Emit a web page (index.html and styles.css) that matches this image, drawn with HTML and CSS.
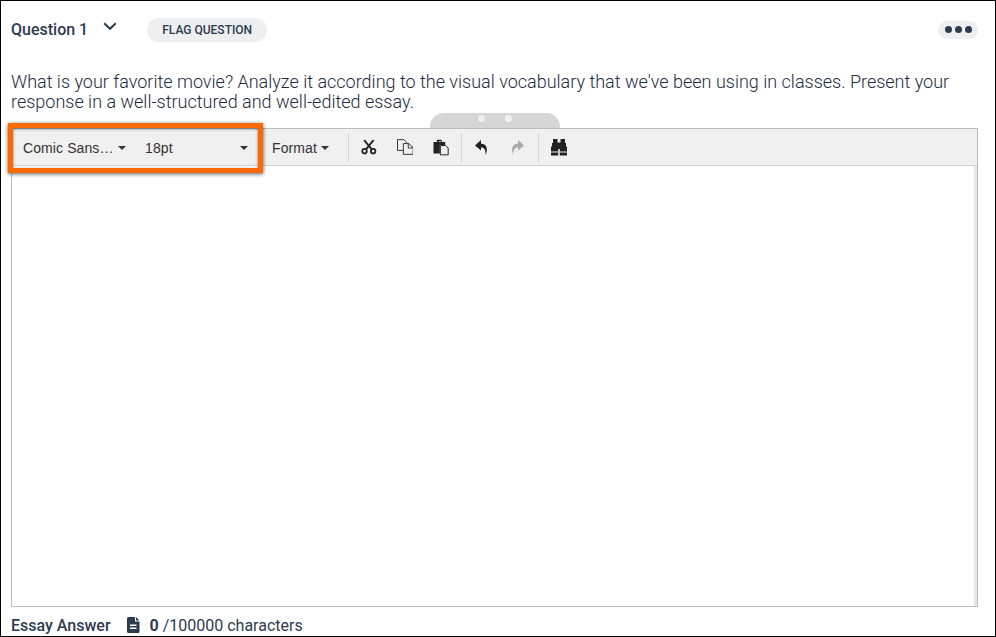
FILE: index.html
```html
<!DOCTYPE html>
<html lang="en">
<head>
<meta charset="utf-8">
<title>Question 1</title>
<link rel="stylesheet" href="styles.css">
</head>
<body>
<main class="frame">
  <header class="qhead">
    <span class="qtitle">Question 1</span>
    <svg class="chev" width="14" height="9" viewBox="0 0 14 9"><path d="M1.2 1.2 7 6.800l5.800-5.600" fill="none" stroke="#2d3b4e" stroke-width="2"/></svg>
    <button class="flag">FLAG QUESTION</button>
    <span class="more"><i></i><i></i><i></i></span>
  </header>
  <p class="prompt">What is your favorite movie? Analyze it according to the visual vocabulary that we've been using in classes. Present your response in a well-structured and well-edited essay.</p>
  <div class="handle"><i></i><i></i></div>
  <section class="editor">
    <div class="highlight"></div>
    <div class="toolbar">
      <div class="tgroup fonts">
        <span class="sel sel-font">Comic Sans…<b class="caret"></b></span>
        <span class="sel sel-size">18pt<b class="caret"></b></span>
      </div>
      <div class="tgroup fmt">
        <span class="sel">Format<b class="caret"></b></span>
      </div>
      <div class="tgroup icons">
        <svg width="16" height="16" viewBox="0 0 16 16"><g fill="none" stroke="#222" stroke-width="1.800"><circle cx="3.600" cy="12.300" r="2.300"/><circle cx="12.400" cy="12.300" r="2.300"/><path d="M5 10.500 12.800 1M11 10.500 3.200 1" stroke-width="1.900"/></g></svg>
        <svg width="17" height="16" viewBox="0 0 17 16"><g stroke="#333" stroke-width="1" fill="#f0f0f0"><path d="M.5.500h6.500l3 3v8H.5z"/><path d="M6.500 4.500h5.500l4.500 4v7h-10z"/><path d="M11.500 4.500v4.500h5" fill="none"/></g></svg>
        <svg width="16" height="17" viewBox="0 0 16 17"><path d="M.5 3h3.500V1.500C4 .8 4.500.5 5 .5h3c.6 0 1 .4 1 1V3h3.500v3H7v8.500H.5z" fill="#222"/><path d="M6 2.500h2" stroke="#f0f0f0"/><path d="M7.500 6.500h5.500l2.500 2.500v7h-8z" fill="#f0f0f0" stroke="#222"/></svg>
      </div>
      <div class="tgroup icons">
        <svg width="15" height="17" viewBox="0 0 15 17"><path d="M7 1 1 6.500 7 11.500V8.500c3 0 4.500 1.800 4.800 7.500C13.800 10.500 13.500 5 7 4.800z" fill="#222"/></svg>
        <svg width="15" height="17" viewBox="0 0 15 17"><path d="M8 1l6 5.500L8 11.500V8.500c-3 0-4.500 1.800-4.800 7.500C1.200 10.500 1.500 5 8 4.800z" fill="#aaa"/></svg>
      </div>
      <div class="tgroup icons last">
        <svg width="18" height="17" viewBox="0 0 18 17"><path d="M3 0h4.500v3.500h3V0H15v4h1v3l1 1v8.500h-7.200V10H8.200v6.500H1V8l1-1V4h1z" fill="#222"/><path d="M1 13h7.200M9.800 13H17" stroke="#f0f0f0" stroke-width="1"/></svg>
      </div>
    </div>
    <div class="body"></div>
  </section>
  <footer class="foot">
    <span class="flabel">Essay Answer</span>
    <svg class="doc" width="13" height="16" viewBox="0 0 13 16"><path fill-rule="evenodd" d="M1.500 0H8v4.500h4.500v10a1.500 1.500 0 0 1-1.500 1.500H1.500A1.500 1.500 0 0 1 0 14.500v-13A1.500 1.500 0 0 1 1.500 0zM3 7.500V9h6.500V7.500zM3 10.500V12h6.500v-1.500zM9 0l3.500 3.500H9z" fill="#2d3b4e"/></svg>
    <span class="count"><strong>0</strong> /100000 characters</span>
  </footer>
</main>
</body>
</html>
```
FILE: styles.css
```css
* { box-sizing: border-box; }
html, body { margin: 0; padding: 0; background: #fff; }
.frame {
  position: relative;
  width: 996px;
  height: 637px;
  border: 1px solid #000;
  padding: 0 17px 0 10px;
  font-family: Roboto, sans-serif;
  color: #2d3b4e;
  overflow: hidden;
}
.qhead { display: flex; align-items: center; height: 58px; padding-bottom: 1px; }
.qtitle { font-size: 16px; font-weight: 500; }
.chev { margin: -6px 0 0 15px; }
.flag {
  margin-left: 30px;
  width: 120px;
  height: 24px;
  border: 0;
  border-radius: 12px;
  background: #eeeff1;
  color: #2d3b4e;
  font: 500 12px Roboto, sans-serif;
  padding: 0;
}
.more {
  margin-left: auto;
  width: 40px;
  height: 18px;
  border-radius: 9px;
  background: #eeeff1;
  display: flex;
  align-items: center;
  justify-content: center;
  gap: 3px;
}
.more i { width: 7px; height: 7px; border-radius: 50%; background: #2d3b4e; }
.prompt { margin: 13px -10px 0 0; font-size: 18px; font-weight: 300; line-height: 20px; color: #1d2c40; }
.handle {
  width: 130px;
  height: 15px;
  margin: 1px 0 0 419px;
  background: #d6d6d6;
  border-radius: 14px 14px 0 0;
  display: flex;
  justify-content: center;
  align-items: center;
  gap: 20px;
  padding: 0 0 4px;
}
.handle i { width: 7px; height: 7px; border-radius: 50%; background: #f0f0f0; }
.editor {
  position: relative;
  height: 479px;
  border: 1px solid #bdbdbd;
  display: flex;
  flex-direction: column;
}
.highlight {
  position: absolute;
  left: -4px;
  top: -6px;
  width: 255px;
  height: 50px;
  border: 5px solid #f96a04;
  box-shadow: 0 1px 4px rgba(0, 0, 0, .65), inset 0 1px 3px rgba(0, 0, 0, .5);
  z-index: 2;
}
.toolbar {
  height: 37px;
  background: #f0f0f0;
  border-bottom: 1px solid #cfcfcf;
  display: flex;
  align-items: center;
  font-family: "Liberation Sans", sans-serif;
  font-size: 14px;
  letter-spacing: .1px;
  color: #333;
  flex: none;
}
.tgroup { display: flex; align-items: center; height: 29px; }
.tgroup + .tgroup { border-left: 1px solid #d6d6d6; }
.fonts { width: 250px; padding-left: 11px; }
.sel { display: flex; align-items: center; padding-top: 2px; }
.sel-font { width: 122px; }
.sel-size { width: 103px; justify-content: space-between; }
.caret {
  width: 0;
  height: 0;
  margin-left: 4px;
  border: 4px solid transparent;
  border-top-color: #333;
  border-bottom: 0;
}
.fmt { width: 86px; padding-left: 10px; border-left: 0 !important; }
.icons { gap: 20px; padding: 0 12px; }
.icons:nth-child(3) { width: 113px; padding-left: 12px; }
.icons:nth-child(4) { width: 77px; padding-left: 12px; gap: 21px; }
.last { padding-left: 11px; }
.body { flex: 1; background: #fff; border-right: 3px solid #e6e6e6; }
.foot { display: flex; align-items: center; height: 28px; padding-top: 8px; font-size: 16px; }
.flabel { font-weight: 500; }
.doc { margin-left: 16px; }
.count { margin-left: 10px; }
.count strong { font-weight: 700; }
```
